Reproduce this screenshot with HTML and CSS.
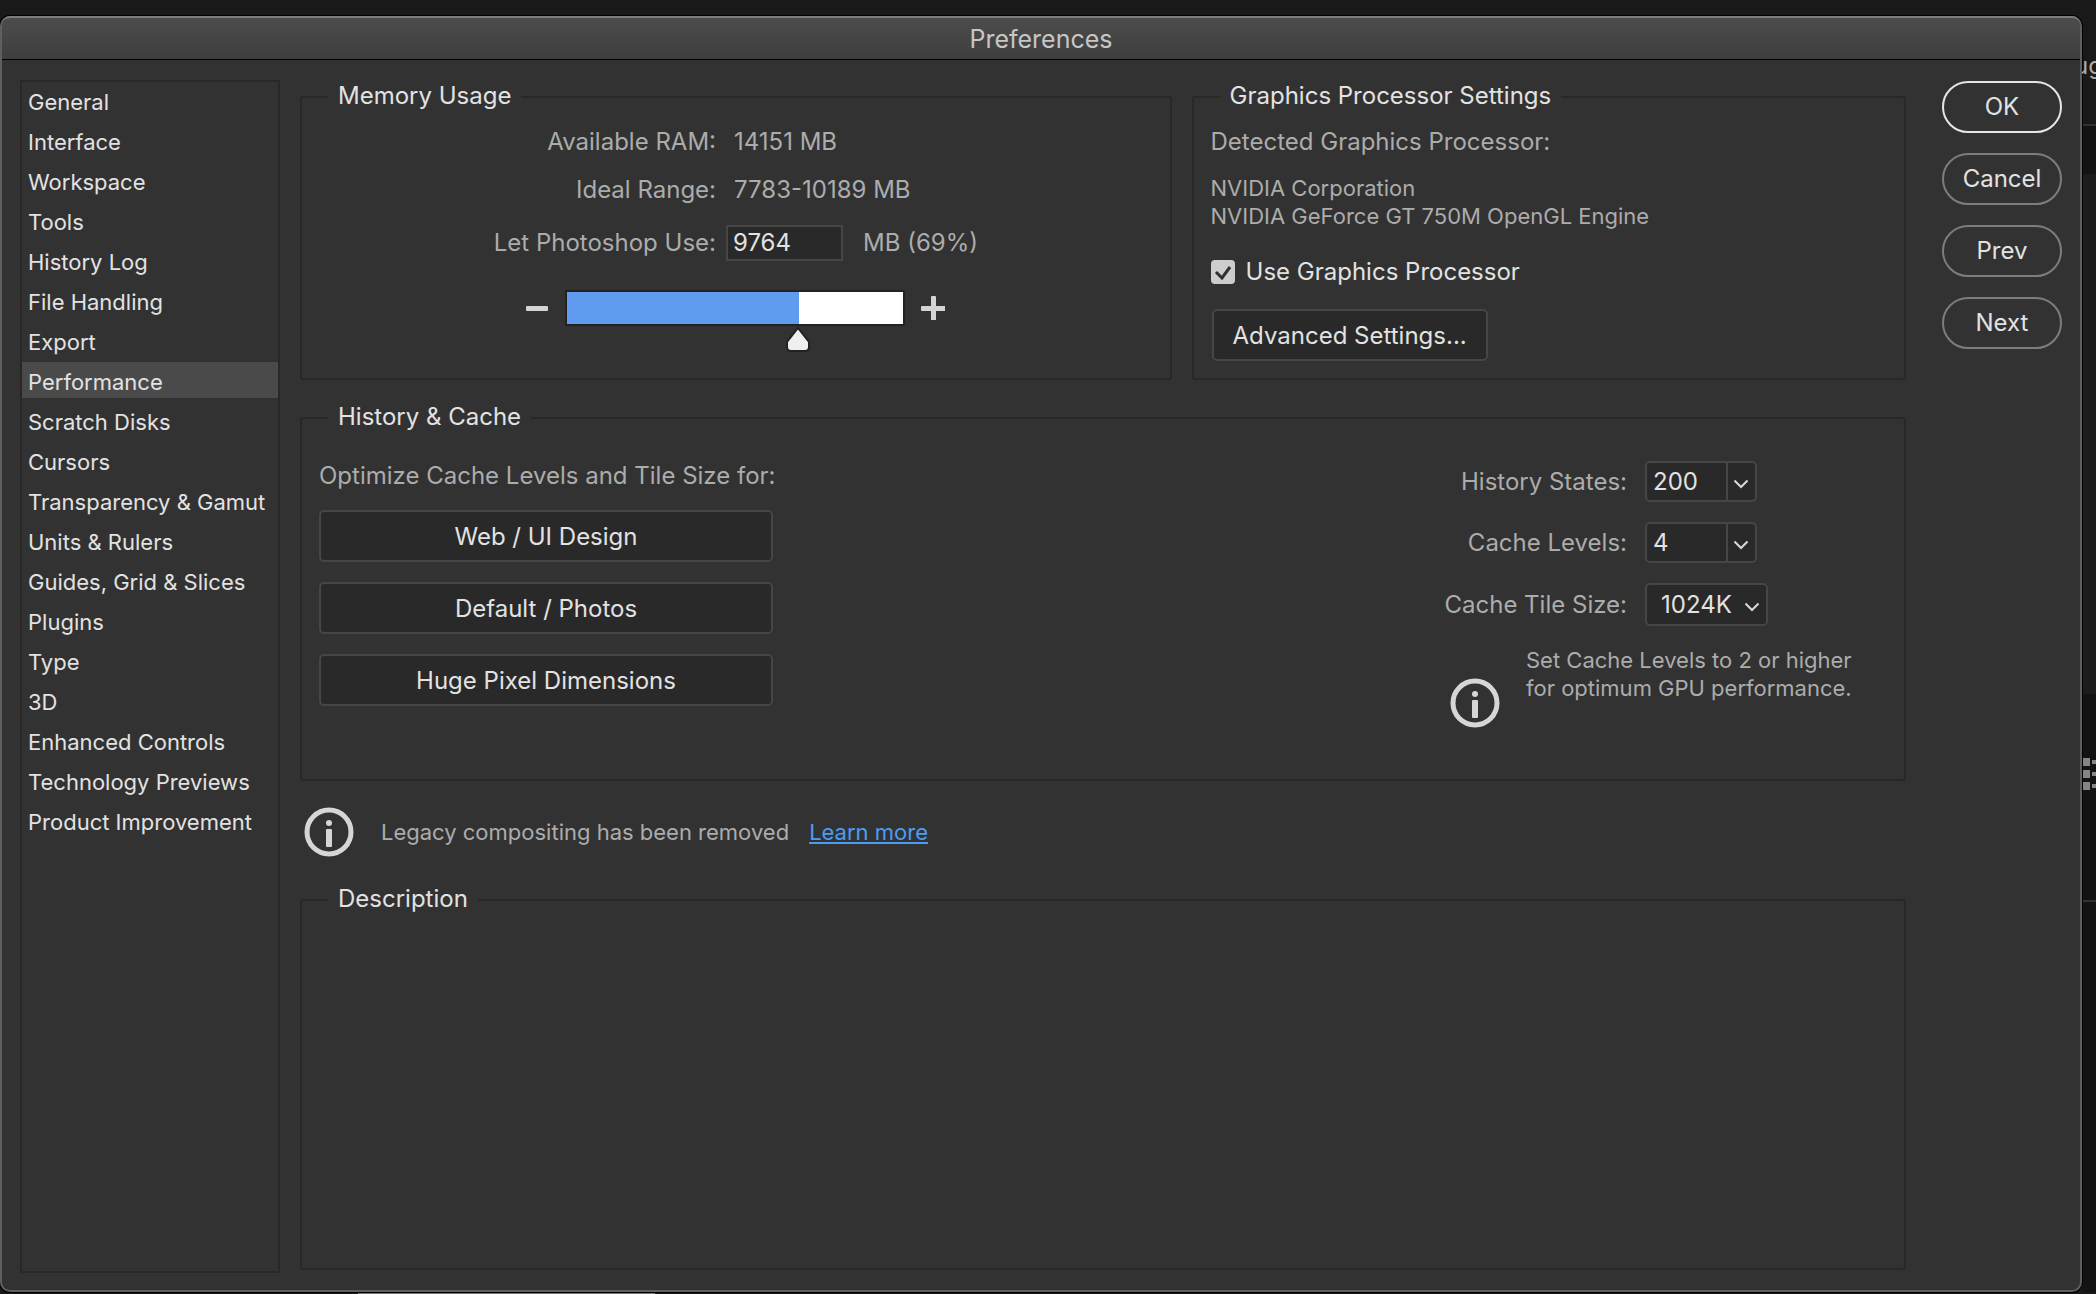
FILE: index.html
```html
<!DOCTYPE html>
<html lang="en">
<head>
  <meta charset="UTF-8">
  <meta name="viewport" content="width=device-width, initial-scale=1.0">
  <title>Preferences</title>
  <link rel="stylesheet" href="styles.css">
</head>
<body>
  <div class="desktop">
    <main class="window">
      <header class="titlebar">
        <h1>Preferences</h1>
      </header>

      <form class="window-body" onsubmit="return false;">
        <nav class="sidebar">
          <a href="#general">General</a>
          <a href="#interface">Interface</a>
          <a href="#workspace">Workspace</a>
          <a href="#tools">Tools</a>
          <a href="#history-log">History Log</a>
          <a href="#file-handling">File Handling</a>
          <a href="#export">Export</a>
          <a href="#performance" class="active">Performance</a>
          <a href="#scratch-disks">Scratch Disks</a>
          <a href="#cursors">Cursors</a>
          <a href="#transparency">Transparency &amp; Gamut</a>
          <a href="#units">Units &amp; Rulers</a>
          <a href="#guides">Guides, Grid &amp; Slices</a>
          <a href="#plugins">Plugins</a>
          <a href="#type">Type</a>
          <a href="#3d">3D</a>
          <a href="#enhanced-controls">Enhanced Controls</a>
          <a href="#technology-previews">Technology Previews</a>
          <a href="#product-improvement">Product Improvement</a>
        </nav>

        <div class="panels">
          <div class="panel-row">
            <fieldset class="panel memory">
              <legend>Memory Usage</legend>
              <div class="memory-row">
                <span class="memory-label">Available RAM:</span>
                <span class="memory-value">14151 MB</span>
              </div>
              <div class="memory-row">
                <span class="memory-label">Ideal Range:</span>
                <span class="memory-value">7783-10189 MB</span>
              </div>
              <div class="memory-row memory-use">
                <label class="memory-label" for="ram">Let Photoshop Use:</label>
                <input type="text" id="ram" class="text-box" value="9764">
                <span>MB (69%)</span>
              </div>
              <div class="slider-row">
                <button type="button" class="step-btn" aria-label="Less memory">
                  <svg width="24" height="24" viewBox="0 0 24 24"><rect x="1" y="10" width="22" height="5" rx="1" fill="#d4d4d4"/></svg>
                </button>
                <input type="range" class="slider" aria-label="Memory" min="0" max="13900" value="9764">
                <button type="button" class="step-btn" aria-label="More memory">
                  <svg width="24" height="24" viewBox="0 0 24 24"><path d="M1 10h9V1q0-1 1-1h3q1 0 1 1v9h9v5h-9v9h-5v-9H1q-1 0-1-1v-3q0-1 1-1z" fill="#d4d4d4"/></svg>
                </button>
              </div>
            </fieldset>

            <fieldset class="panel graphics">
              <legend>Graphics Processor Settings</legend>
              <p class="detected">Detected Graphics Processor:</p>
              <p class="gpu-name">NVIDIA Corporation<br>NVIDIA GeForce GT 750M OpenGL Engine</p>
              <div class="check-row">
                <input type="checkbox" id="use-gpu" class="check" checked>
                <label for="use-gpu">Use Graphics Processor</label>
              </div>
              <button type="button" class="btn advanced-btn">Advanced Settings...</button>
            </fieldset>
          </div>

          <fieldset class="panel history">
            <legend>History &amp; Cache</legend>
            <div class="history-body">
              <div class="presets">
                <p>Optimize Cache Levels and Tile Size for:</p>
                <button type="button" class="btn">Web / UI Design</button>
                <button type="button" class="btn">Default / Photos</button>
                <button type="button" class="btn">Huge Pixel Dimensions</button>
              </div>

              <div class="cache">
                <div class="cache-row">
                  <label for="states">History States:</label>
                  <div class="combo">
                    <input type="text" id="states" value="200">
                    <button type="button" aria-label="History states list">
                      <svg width="16" height="10" viewBox="0 0 16 10"><path d="M1.500 1.500L8 8l6.500-6.500" fill="none" stroke="#d8d8d8" stroke-width="2"/></svg>
                    </button>
                  </div>
                </div>
                <div class="cache-row">
                  <label for="levels">Cache Levels:</label>
                  <div class="combo">
                    <input type="text" id="levels" value="4">
                    <button type="button" aria-label="Cache levels list">
                      <svg width="16" height="10" viewBox="0 0 16 10"><path d="M1.500 1.500L8 8l6.500-6.500" fill="none" stroke="#d8d8d8" stroke-width="2"/></svg>
                    </button>
                  </div>
                </div>
                <div class="cache-row">
                  <label for="tile">Cache Tile Size:</label>
                  <select id="tile" class="tile-select">
                    <option>1024K</option>
                  </select>
                </div>
                <div class="cache-note">
                  <svg class="info-icon" viewBox="0 0 50 50"><circle cx="25" cy="25" r="22" fill="none" stroke="#d6d6d6" stroke-width="5"/><circle cx="25" cy="16" r="3" fill="#d6d6d6"/><rect x="22" y="22" width="6" height="18" rx="1" fill="#d6d6d6"/></svg>
                  <p>Set Cache Levels to 2 or higher<br>for optimum GPU performance.</p>
                </div>
              </div>
            </div>
          </fieldset>

          <div class="notice">
            <svg class="info-icon" viewBox="0 0 50 50"><circle cx="25" cy="25" r="22" fill="none" stroke="#d6d6d6" stroke-width="5"/><circle cx="25" cy="16" r="3" fill="#d6d6d6"/><rect x="22" y="22" width="6" height="18" rx="1" fill="#d6d6d6"/></svg>
            <span>Legacy compositing has been removed</span>
            <a href="#learn-more">Learn more</a>
          </div>

          <fieldset class="panel description">
            <legend>Description</legend>
          </fieldset>
        </div>

        <div class="actions">
          <button type="submit" class="pill primary">OK</button>
          <button type="button" class="pill">Cancel</button>
          <button type="button" class="pill">Prev</button>
          <button type="button" class="pill">Next</button>
        </div>
      </form>
    </main>

    <!-- sliver of the app behind the window -->
    <aside class="behind">
      <div class="behind-tab">ug</div>
      <div class="behind-bar"></div>
      <div class="behind-list">
        <svg width="13" height="32" viewBox="0 0 13 32"><path d="M0 0h7v8H0zM0 12h7v8H0zM0 24h7v8H0zM9 2h4v4H9zM9 14h4v4H9zM9 26h4v4H9z" fill="#858585"/></svg>
      </div>
      <div class="behind-rest"></div>
    </aside>
  </div>
  <div class="behind-bottom"></div>
</body>
</html>
```
FILE: styles.css
```css
* {
  box-sizing: border-box;
}
body {
  margin: 0;
  min-height: 100vh;
  display: flex;
  flex-direction: column;
  background: #191919;
  color: #acacac;
  font-family: Inter, "Liberation Sans", sans-serif;
  font-size: 24px;
  line-height: 28px;
}
p, h1 {
  margin: 0;
}
button, input, select {
  font: inherit;
  color: #e2e2e2;
}
.desktop {
  flex: 1;
  display: flex;
}

/* window */
.window {
  flex: 1;
  display: flex;
  flex-direction: column;
  margin-top: 16px;
  background: #323232;
  border: 2px solid #5f5f5f;
  border-top: 0;
  border-radius: 10px;
  box-shadow: 0 0 0 1px #000;
}
.titlebar {
  height: 44px;
  border-top: 2px solid #7c7c7c;
  border-bottom: 1px solid #000;
  border-radius: 8px 8px 0 0;
  background: linear-gradient(#4c4c4c, #3e3e3e);
  text-align: center;
}
.titlebar h1 {
  font-size: 25px;
  font-weight: normal;
  line-height: 42px;
  color: #c6c6c6;
}
.window-body {
  flex: 1;
  display: flex;
  padding: 20px 18px 17px 18px;
}

/* sidebar */
.sidebar {
  width: 260px;
  border: 2px solid #282828;
  display: flex;
  flex-direction: column;
  gap: 4px;
}
.sidebar a {
  height: 36px;
  padding-left: 6px;
  font-size: 22px;
  line-height: 40px;
  color: #e2e2e2;
  text-decoration: none;
  white-space: nowrap;
}
.sidebar a.active {
  background: #4a4a4a;
}

/* panels */
.panels {
  flex: 1;
  display: flex;
  flex-direction: column;
  margin: 4px 36px 3px 20px;
}
.panel-row {
  display: grid;
  grid-template-columns: 871fr 714fr;
  gap: 20px;
}
.panel {
  margin: 0;
  min-width: 0;
  padding: 0;
  border: 2px solid #282828;
  border-radius: 3px;
}
.panel legend {
  margin-left: 26px;
  padding: 0 10px 2px 10px;
  line-height: 24px;
  color: #e2e2e2;
}
.memory, .graphics {
  height: 296px;
}
.graphics {
  padding-left: 17px;
}
.graphics legend, .history legend {
  margin-left: 9px;
}

/* memory usage */
.memory-row {
  display: flex;
  align-items: center;
  height: 48px;
}
.memory-row:first-of-type {
  margin-top: 8px;
}
.memory-label {
  width: 414px;
  margin-right: 18px;
  text-align: right;
}
.memory-use {
  height: 57px;
}
.memory-use .memory-label {
  margin-right: 10px;
}
.text-box {
  width: 117px;
  height: 36px;
  margin-right: 20px;
  padding: 0 5px;
  background: #292929;
  border: 2px solid #464646;
}
.slider-row {
  display: flex;
  align-items: center;
  gap: 16px;
  margin: 19px 0 0 223px;
}
.step-btn {
  width: 24px;
  height: 24px;
  padding: 0;
  border: 0;
  background: none;
}
.step-btn svg, .combo svg {
  display: block;
}
.slider {
  -webkit-appearance: none;
  appearance: none;
  width: 340px;
  height: 36px;
  margin: 0;
  background: linear-gradient(to right, #5f9cf0 69%, #fff 69%);
  border: 2px solid #222;
}
.slider::-webkit-slider-runnable-track {
  height: 32px;
}
.slider::-webkit-slider-thumb {
  -webkit-appearance: none;
  width: 24px;
  height: 26px;
  margin-top: 35px;
  background: url("data:image/svg+xml,%3Csvg xmlns='http://www.w3.org/2000/svg' viewBox='0 0 24 26'%3E%3Cpath d='M12 1L23 15v5q0 4-4 4H5q-4 0-4-4v-5z' fill='%23efefef' stroke='%23222' stroke-width='2'/%3E%3C/svg%3E") no-repeat;
}

/* graphics processor */
.detected {
  margin-top: 18px;
}
.gpu-name {
  margin-top: 18px;
  font-size: 22px;
}
.check-row {
  display: flex;
  align-items: center;
  gap: 11px;
  margin-top: 28px;
  color: #e2e2e2;
}
.check {
  -webkit-appearance: none;
  appearance: none;
  width: 24px;
  height: 24px;
  margin: 0;
  border-radius: 4px;
  background: #cdcdcd;
}
.check:checked {
  background: #cdcdcd url("data:image/svg+xml,%3Csvg xmlns='http://www.w3.org/2000/svg' viewBox='0 0 24 24'%3E%3Cpath d='M5 12l6 6 8-11' fill='none' stroke='%23303030' stroke-width='3'/%3E%3C/svg%3E");
}
.btn {
  height: 52px;
  padding: 2px 19px 0 19px;
  background: #292929;
  border: 2px solid #464646;
  border-radius: 5px;
}
.advanced-btn {
  margin: 23px 0 0 1px;
}

/* history and cache */
.history {
  height: 376px;
  margin-top: 25px;
  padding: 0 47px 0 17px;
}
.history-body {
  display: flex;
  justify-content: space-between;
}
.presets {
  width: 454px;
  display: flex;
  flex-direction: column;
  gap: 20px;
  margin-top: 31px;
}
.presets p {
  white-space: nowrap;
}
.cache {
  width: 414px;
  display: flex;
  flex-direction: column;
  gap: 20px;
  margin-top: 30px;
}
.cache-row {
  display: flex;
  align-items: center;
}
.cache-row label {
  width: 184px;
  margin-right: 18px;
  text-align: right;
  white-space: nowrap;
}
.combo {
  display: flex;
  width: 112px;
  height: 41px;
  background: #292929;
  border: 2px solid #464646;
  border-radius: 5px;
}
.combo input {
  flex: 1;
  min-width: 0;
  padding: 0 6px;
  border: 0;
  background: none;
}
.combo button {
  width: 29px;
  padding: 4px 0 0 5px;
  border: 0;
  border-left: 2px solid #464646;
  background: none;
}
.tile-select {
  -webkit-appearance: none;
  appearance: none;
  width: 123px;
  height: 43px;
  padding: 0 0 0 14px;
  border: 2px solid #464646;
  border-radius: 5px;
  background: #292929 url("data:image/svg+xml,%3Csvg xmlns='http://www.w3.org/2000/svg' width='16' height='10'%3E%3Cpath d='M1.500 1.500L8 8l6.500-6.500' fill='none' stroke='%23d8d8d8' stroke-width='2'/%3E%3C/svg%3E") no-repeat right 6px top 17px;
}
.cache-note {
  display: flex;
  align-items: flex-end;
  gap: 26px;
  margin-left: 7px;
  font-size: 22px;
  white-space: nowrap;
}
.cache-note .info-icon {
  margin-top: 32px;
}
.cache-note p {
  align-self: flex-start;
}
.info-icon {
  flex: none;
  width: 50px;
  height: 50px;
}

/* notice */
.notice {
  display: flex;
  align-items: center;
  margin: 26px 0 30px 4px;
  font-size: 22px;
}
.notice span {
  margin: 0 20px 0 27px;
}
.notice a {
  color: #4b9cf5;
}
.description {
  flex: 1;
}

/* buttons on the right */
.actions {
  display: flex;
  flex-direction: column;
  gap: 20px;
  margin-top: 1px;
}
.pill {
  width: 120px;
  height: 52px;
  padding: 0;
  background: none;
  border: 2px solid #7d7d7d;
  border-radius: 26px;
}
.pill.primary {
  border-color: #e6e6e6;
}

/* app behind the window */
.behind {
  width: 14px;
  display: flex;
  flex-direction: column;
  overflow: hidden;
  padding-left: 1px;
}
.behind-tab {
  height: 126px;
  padding-top: 52px;
  border-bottom: 2px solid #323232;
  text-indent: -9px;
}
.behind-bar {
  height: 48px;
  background: #131313;
}
.behind-list {
  height: 728px;
  padding-top: 584px;
  border-bottom: 2px solid #323232;
  background: linear-gradient(#1c1c1c 520px, #131313 520px);
}
.behind-rest {
  flex: 1;
  background: #131313;
}
.behind-bottom {
  width: 297px;
  height: 1px;
  margin: 1px 0 0 358px;
  background: #777;
}
```
